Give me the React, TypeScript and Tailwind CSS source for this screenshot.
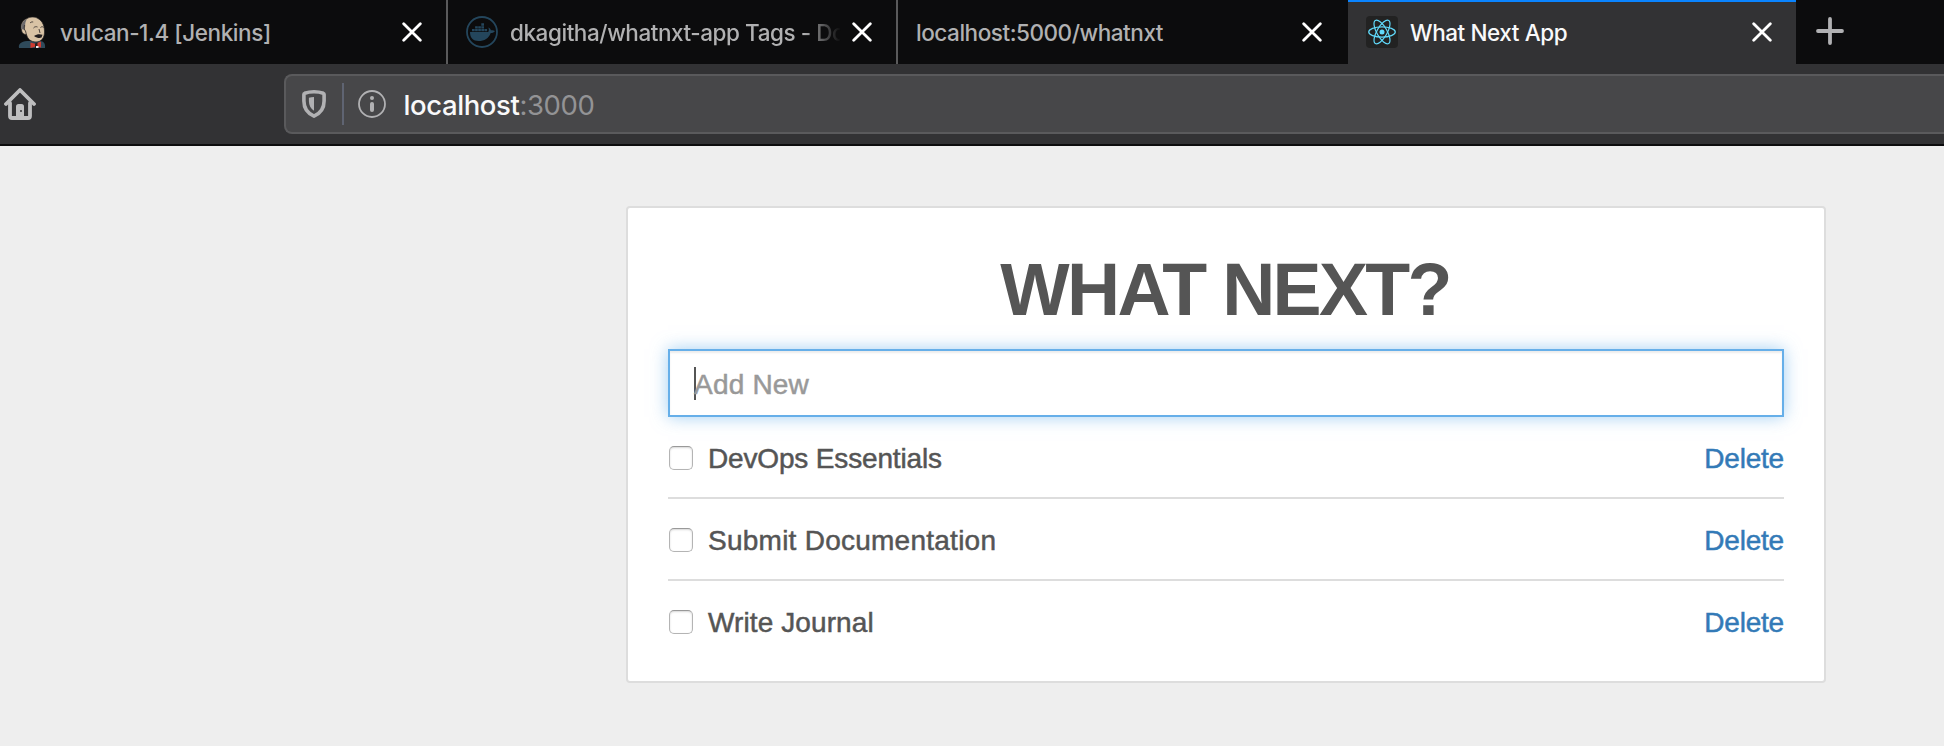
import type { ReactNode } from "react";

function JenkinsIcon() {
  return (
    <svg viewBox="0 0 32 32" className="size-8 shrink-0">
      <path d="M3 32c-1-4 2-6.500 8-7h13c4 0 5.500 3 5 7z" fill="#2f4a5a" />
      <path d="M5.500 14C4 9 6 4.500 11 2.500c3-1.800 8-2 11 0 5 2.800 6.500 8 6.500 13.500 0 5.500-3 10-8.500 10-5 0-8.500-3-9.500-7.500C8 18.500 6 17.500 5.500 14z" fill="#d9c3a5" stroke="#231f20" strokeWidth=".7" />
      <path d="M5.500 13C4.500 8.500 7 4.500 11 3c-1.500 2.500-2 4.500-1.800 7L8.500 14z" fill="#6d6b6d" />
      <path d="M8.500 9c-1 3 0 5 1 6l1 4M14 7c1-1 2-1.200 3.200-1M17.500 12c1-1.400 3-1.600 4-1M24.500 11.500c1-1 2.500-1 3 0M23 13l1 4" fill="none" stroke="#3a3330" strokeWidth=".9" />
      <path d="M18 20c3-2.200 6-2.200 8.500-1.200l-1 2.800c-2 1-4.500.4-7.500-1.600z" fill="#231f20" />
      <path d="M14.500 26.500l4.500 1.200 6-2.200v6l-5-1-5.500 1.500z" fill="#cf3a2f" />
      <path d="M19 27.500l2.500-1v5.500H19z" fill="#231f20" />
      <path d="M20 30h2.500v2H20z" fill="#f3eeee" />
    </svg>
  );
}

function DockerIcon() {
  return (
    <svg viewBox="0 0 32 32" className="size-8 shrink-0" fill="#24465c">
      <circle cx="16" cy="16" r="15" fill="none" stroke="#24465c" strokeWidth="1.8" />
      <path d="M4 16h18.2c.9-1.1.9-2.7.1-4.5 1.6.6 2.4 1.6 2.6 2.8 1.500-.3 2.800-.1 4 .6-.8 1.500-2.200 2.100-4.200 2.100C22.700 22.500 18.500 25 12.500 25 7.200 25 4 22 4 16z" />
      <path d="M6 12.900h2.700v2.300H6zM9.100 12.900h2.700v2.300H9.100zM12.200 12.900h2.700v2.300h-2.700zM15.300 12.900H18v2.300h-2.700zM18.400 12.900h2.700v2.300h-2.700zM9.100 10.200h2.700v2.300H9.100zM12.200 10.200h2.700v2.300h-2.700zM15.300 10.200H18v2.300h-2.700zM15.300 7.300H18v2.400h-2.700z" />
    </svg>
  );
}

function ReactIcon() {
  return (
    <svg viewBox="0 0 32 32" className="size-8 shrink-0">
      <rect width="32" height="32" rx="4" fill="#222222" />
      <g fill="none" stroke="#61dafb" strokeWidth="1.2">
        <ellipse cx="16" cy="16" rx="13.300" ry="5.100" />
        <ellipse cx="16" cy="16" rx="13.300" ry="5.100" transform="rotate(60 16 16)" />
        <ellipse cx="16" cy="16" rx="13.300" ry="5.100" transform="rotate(120 16 16)" />
      </g>
      <circle cx="16" cy="16" r="2.500" fill="#61dafb" />
    </svg>
  );
}

function CloseIcon() {
  return (
    <svg viewBox="0 0 20 20" className="size-5 shrink-0" stroke="#ffffff" strokeWidth="2.8" strokeLinecap="round">
      <path d="M1.700 1.700l16.600 16.600M18.300 1.700L1.700 18.300" />
    </svg>
  );
}

type TabProps = {
  icon?: ReactNode;
  title: string;
  tone: string;
  shape: string;
  fade?: boolean;
};

function Tab({ icon, title, tone, shape, fade }: TabProps) {
  return (
    <div className={`flex h-16 shrink-0 items-center ${shape}`}>
      {icon}
      <div
        className={`min-w-0 flex-1 overflow-hidden pt-0.5 text-[22.5px] leading-8 font-medium whitespace-nowrap ${tone} ${
          fade ? "[mask-image:linear-gradient(to_right,black_88%,transparent_99%)]" : ""
        }`}
      >
        {title}
      </div>
      <CloseIcon />
    </div>
  );
}

function TabBar() {
  return (
    <div className="flex h-16 bg-[#0c0c0d]">
      <Tab icon={<JenkinsIcon />} title="vulcan-1.4 [Jenkins]" tone="ml-3 tracking-[-0.42px] text-[#b1b1b2]" shape="w-[448px] border-r-2 border-[#5a5a5b] pl-4 pr-6" />
      <Tab icon={<DockerIcon />} title="dkagitha/whatnxt-app Tags - Do" tone="ml-3 mr-2 tracking-[-0.45px] text-[#b1b1b2]" shape="w-[450px] border-r-2 border-[#5a5a5b] pl-[18px] pr-6" fade />
      <Tab title="localhost:5000/whatnxt" tone="tracking-[-0.46px] text-[#b1b1b2]" shape="w-[450px] pl-[18px] pr-[26px]" />
      <Tab icon={<ReactIcon />} title="What Next App" tone="ml-3 tracking-[-0.42px] text-[#f9f9fa]" shape="w-[448px] bg-[#323234] pl-[18px] pr-6 shadow-[inset_0_2px_0_#0a84ff]" />
      <div className="flex items-center pb-0.5 pl-5">
        <svg viewBox="0 0 28 28" className="size-7" stroke="#b1b1b3" strokeWidth="3.800" strokeLinecap="round">
          <path d="M14 2v24M2 14h24" />
        </svg>
      </div>
    </div>
  );
}

function Toolbar() {
  return (
    <div className="flex h-[82px] items-center overflow-hidden border-b-2 border-[#0c0c0d] bg-[#323234]">
      <svg viewBox="0 0 32 32" className="ml-1 size-8 shrink-0" fill="none" stroke="#bebebf" strokeWidth="3.800" strokeLinecap="round" strokeLinejoin="round">
        <path d="M2 16L16 2l14 14" />
        <path d="M6 15v13a2 2 0 0 0 2 2h16a2 2 0 0 0 2-2V15" />
        <path d="M12 30V18.500a2.500 2.500 0 0 1 2.500-2.500h3a2.500 2.500 0 0 1 2.500 2.500V30z" fill="#bebebf" stroke="none" />
        <circle cx="17" cy="23" r="1" fill="#323234" stroke="none" />
      </svg>
      <div className="ml-[248px] flex h-[60px] flex-1 shrink-0 items-center rounded-l-lg border-2 border-r-0 border-[#5a5a5c] bg-[#474749] pl-4">
        <svg viewBox="0 0 24 28" className="h-7 w-6 shrink-0">
          <path d="M12 1.800C8.500 1.800 5.200 2.400 2.700 3.300c-.5.200-.8.600-.8 1.200v6.500c0 7.500 4.300 12.600 10.100 15.100 5.800-2.500 10.100-7.600 10.100-15.100V4.500c0-.6-.3-1-.8-1.200C18.800 2.400 15.500 1.800 12 1.800z" fill="none" stroke="#b1b1b3" strokeWidth="3.600" />
          <path d="M12 7v13.800c-3.300-2-5.100-5.400-5.100-9.800V7.700C8.500 7.200 10.200 7 12 7z" fill="#b1b1b3" />
        </svg>
        <div className="ml-4 h-[42px] w-0.5 bg-[#5f6472]" />
        <svg viewBox="0 0 28 28" className="ml-3.5 size-7 shrink-0">
          <circle cx="14" cy="14" r="13" fill="none" stroke="#b1b1b3" strokeWidth="1.800" />
          <circle cx="14" cy="8" r="2" fill="#b1b1b3" />
          <rect x="12" y="12" width="4" height="10" rx="2" fill="#b1b1b3" />
        </svg>
        <div className="ml-[17.500px] pt-px text-[27.500px] leading-8 font-medium tracking-[-0.4px] text-[#f9f9fa]">
          localhost<span className="font-normal text-[#939395]">:3000</span>
        </div>
      </div>
    </div>
  );
}

const tasks = [
  { label: "DevOps Essentials", spacing: "tracking-[-0.16px]" },
  { label: "Submit Documentation", spacing: "tracking-[0.25px]" },
  { label: "Write Journal", spacing: "tracking-[0.1px]" },
];

function TaskRow({ label, spacing }: { label: string; spacing: string }) {
  return (
    <li className="flex h-[82px] items-center border-b-2 border-[#dddddd] pt-0.5 last:h-20 last:border-b-0">
      <span className="ml-px size-6 shrink-0 rounded-[5px] border border-[#b4b4b4] border-t-[#999999] bg-white shadow-[inset_0_1px_2px_rgba(0,0,0,0.16)]" />
      <span className={`ml-[15px] flex-1 pt-0.5 [-webkit-text-stroke:0.5px_currentColor] ${spacing}`}>{label}</span>
      <a className="pt-0.5 tracking-[-0.2px] text-[#337ab7] [-webkit-text-stroke:0.5px_currentColor]">Delete</a>
    </li>
  );
}

export default function App() {
  return (
    <div className="flex h-[746px] w-[1944px] flex-col overflow-hidden bg-[#eeeeee] font-['Inter',sans-serif]">
      <TabBar />
      <Toolbar />
      <main className="mt-[60px] ml-[626px] h-[477px] w-[1200px] rounded border-2 border-[#dddddd] bg-white px-[40px] font-['Liberation_Sans',Arial,sans-serif] text-[28px] leading-10 text-[#555555]">
        <h1 className="mt-[42px] h-[99px] pr-0.5 text-center text-[73.500px] leading-[79px] font-bold tracking-[-2.700px]">WHAT NEXT?</h1>
        <div className="flex h-[68px] items-center border-2 border-[#66afe9] pl-6 text-[#999999] shadow-[inset_0_2px_2px_rgba(0,0,0,0.075),0_0_16px_rgba(102,175,233,0.6)]">
          <span className="h-[33px] w-0.5 bg-[#555555]" />
          <span className="-ml-0.5 pt-[3px] tracking-[0.2px] [-webkit-text-stroke:0.5px_currentColor]">Add New</span>
        </div>
        <ul>
          {tasks.map((task) => (
            <TaskRow key={task.label} {...task} />
          ))}
        </ul>
      </main>
    </div>
  );
}
